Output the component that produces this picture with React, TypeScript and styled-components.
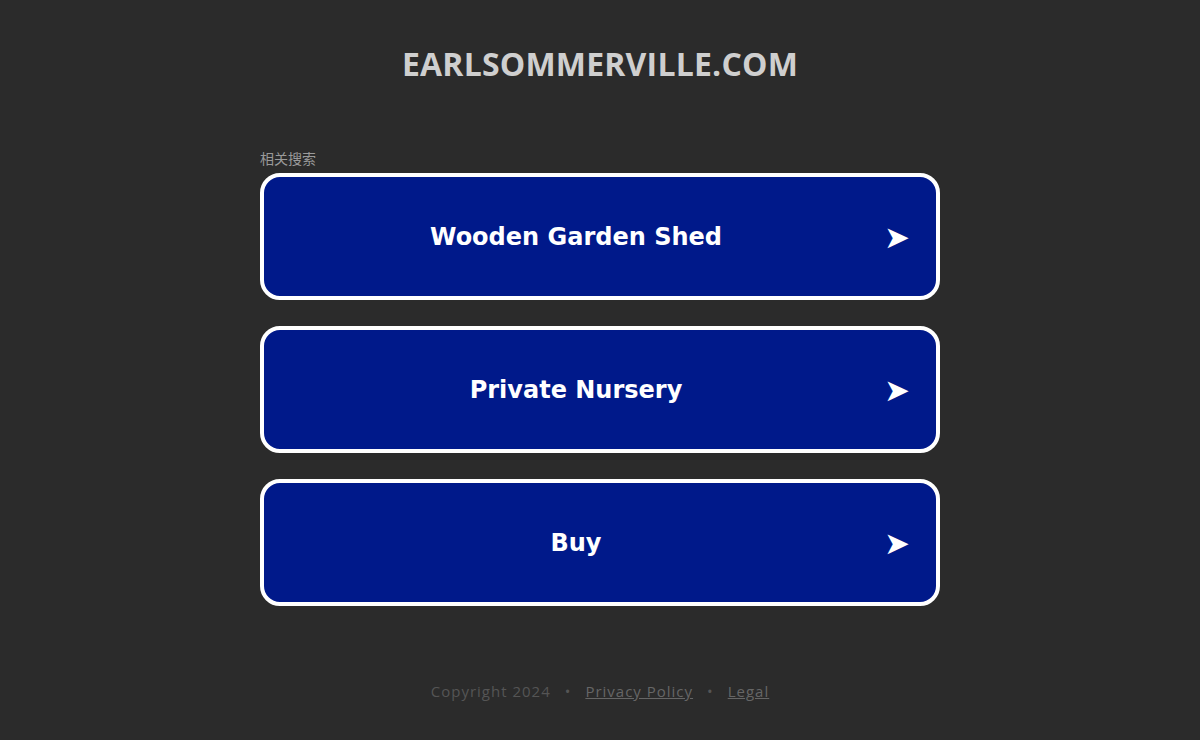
import React from "react";
import styled, { createGlobalStyle } from "styled-components";

const Global = createGlobalStyle`
  html, body { margin: 0; padding: 0; background: #2b2b2b; }
  body { font-family: "Open Sans", "Noto Sans", sans-serif; }
`;

const Page = styled.div`
  min-height: 740px;
  display: flex;
  flex-direction: column;
  align-items: center;
`;

const Title = styled.h1`
  margin: 43px 0 0;
  font-family: "Open Sans", sans-serif;
  font-weight: 700;
  font-size: 32px;
  line-height: 42px;
  color: #cfcfcf;
  letter-spacing: 0.2px;
`;

const Section = styled.div`
  width: 680px;
  margin-top: 64px;
  display: flex;
  flex-direction: column;
`;

const Label = styled.div`
  font-family: "Noto Sans CJK SC", sans-serif;
  font-size: 14px;
  line-height: 18px;
  color: #9a9a9a;
  margin-bottom: 6px;
`;

const List = styled.div`
  display: flex;
  flex-direction: column;
  gap: 26px;
`;

const Item = styled.a`
  box-sizing: border-box;
  height: 127px;
  border: 4px solid #ffffff;
  border-radius: 20px;
  background: #00198a;
  display: flex;
  align-items: center;
  text-decoration: none;
  color: #ffffff;
`;

const ItemText = styled.span`
  flex: 1;
  padding-left: 4px;
  text-align: center;
  font-family: "DejaVu Sans", Verdana, sans-serif;
  font-weight: 700;
  font-size: 24px;
  line-height: 30px;
`;

const Arrow = styled.span`
  width: 22px;
  margin-right: 30px;
  font-family: "DejaVu Sans", sans-serif;
  font-size: 31px;
  line-height: 30px;
  color: #ffffff;
`;

const Footer = styled.div`
  margin-top: 75px;
  font-family: "Open Sans", sans-serif;
  font-size: 15px;
  line-height: 20px;
  letter-spacing: 1px;
  color: #555555;
  display: flex;
  gap: 14px;
  align-items: center;
`;

const FooterLink = styled.a`
  color: #666666;
  text-decoration: underline;
`;

const items = ["Wooden Garden Shed", "Private Nursery", "Buy"];

export default function App() {
  return (
    <Page>
      <Global />
      <Title>EARLSOMMERVILLE.COM</Title>
      <Section>
        <Label>相关搜索</Label>
        <List>
          {items.map((t) => (
            <Item key={t} href="#">
              <ItemText>{t}</ItemText>
              <Arrow>➤</Arrow>
            </Item>
          ))}
        </List>
      </Section>
      <Footer>
        <span>Copyright 2024</span>
        <span>•</span>
        <FooterLink href="#">Privacy Policy</FooterLink>
        <span>•</span>
        <FooterLink href="#">Legal</FooterLink>
      </Footer>
    </Page>
  );
}
